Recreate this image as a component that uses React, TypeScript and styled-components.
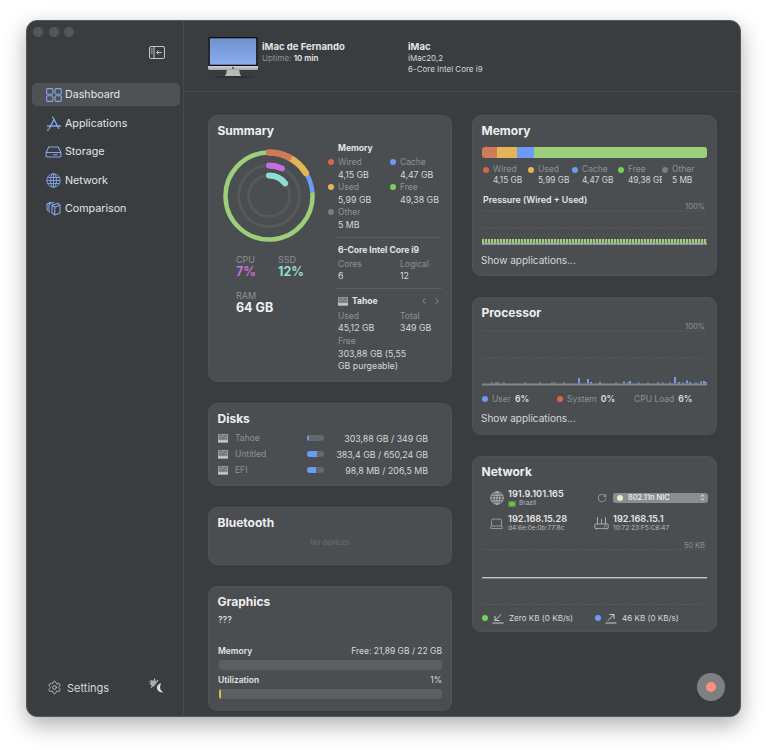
import React from 'react';
import styled, { createGlobalStyle } from 'styled-components';
import { ChevronLeft, ChevronRight, Laptop, RotateCw, Settings } from 'lucide-react';

const colors = {
  window: '#393d40',
  card: '#4b4e51',
  line: '#46494c',
  text: '#e4e5e6',
  value: '#d6d7d8',
  label: '#8e9193',
  blue: '#6c9bf5',
  iconBlue: '#86a6ea',
  orange: '#cf7a58',
  red: '#d8654a',
  yellow: '#e4b555',
  green: '#9bcf7c',
  brightGreen: '#78cf5c',
  purple: '#c56fd8',
  teal: '#8fdcd2',
  grey: '#7b7e80',
};

const GlobalStyle = createGlobalStyle`
  html, body {
    margin: 0;
    padding: 0;
    background: #fff;
    font-family: Inter, "Liberation Sans", sans-serif;
    -webkit-font-smoothing: antialiased;
  }
`;

const Page = styled.div`
  width: 767px;
  height: 750px;
  padding: 20px 0 0 26px;
  box-sizing: border-box;
  overflow: hidden;
`;

const Window = styled.div`
  position: relative;
  width: 715px;
  height: 697px;
  display: flex;
  box-sizing: border-box;
  background: ${colors.window};
  border: 1px solid #55585a;
  border-radius: 11px;
  box-shadow: 0 8px 22px rgba(0, 0, 0, 0.32);
  overflow: hidden;
`;

const Sidebar = styled.aside`
  width: 157px;
  flex: none;
  display: flex;
  flex-direction: column;
  padding: 5px 3px 0 5px;
  box-sizing: border-box;
  border-right: 1px solid ${colors.line};
`;

const Lights = styled.div`
  display: flex;
  gap: 5.5px;
  padding-left: 1px;
  height: 12px;
  align-items: center;
`;

const Light = styled.span`
  width: 10px;
  height: 10px;
  border-radius: 50%;
  background: #55585b;
`;

const ToggleRow = styled.div`
  display: flex;
  justify-content: flex-end;
  padding: 8px 15px 0 0;
  height: 36px;
  box-sizing: border-box;
`;

const Nav = styled.nav`
  display: flex;
  flex-direction: column;
  gap: 5.5px;
  margin-top: 9px;
`;

const NavItem = styled.div<{ $active?: boolean }>`
  height: 23px;
  display: flex;
  align-items: center;
  gap: 3px;
  padding-left: 13px;
  border-radius: 5px;
  font-size: 10.7px;
  color: ${colors.text};
  background: ${(p) => (p.$active ? '#4e5255' : 'transparent')};
`;

const NavIcon = styled.span`
  width: 17px;
  display: flex;
  justify-content: center;
  flex: none;
`;

const SidebarFoot = styled.div`
  margin-top: auto;
  display: flex;
  align-items: center;
  padding: 0 0 21px 15px;
  font-size: 11px;
  color: ${colors.value};
  gap: 5px;
`;

const MoonWrap = styled.span`
  display: flex;
  margin-left: 35px;
  margin-top: -3px;
`;

const Main = styled.main`
  flex: 1;
  min-width: 0;
  display: flex;
  flex-direction: column;
`;

const Header = styled.header`
  height: 71px;
  flex: none;
  display: flex;
  box-sizing: border-box;
  border-bottom: 1px solid ${colors.line};
  padding: 16px 0 0 24px;
`;

const HeaderName = styled.div`
  margin-left: 4px;
  width: 146px;
  padding-top: 3px;
`;

const HeaderModel = styled.div`
  padding-top: 3px;
`;

const Strong = styled.div`
  font-size: 9.5px;
  line-height: 13px;
  font-weight: 700;
  color: ${colors.text};
`;

const Fine = styled.div`
  font-size: 8px;
  line-height: 11px;
  color: ${colors.value};
`;

const Uptime = styled.span`
  color: ${colors.label};
`;

const UptimeValue = styled.b`
  font-weight: 600;
  color: ${colors.text};
`;

const Columns = styled.div`
  display: flex;
  gap: 20px;
  padding: 23px 0 0 24px;
  align-items: flex-start;
`;

const Column = styled.div<{ $width: number }>`
  width: ${(p) => p.$width}px;
  display: flex;
  flex-direction: column;
  gap: 21px;
`;

const Card = styled.section<{ $height: number }>`
  height: ${(p) => p.$height}px;
  box-sizing: border-box;
  background: ${colors.card};
  border-radius: 9px;
  border: 1px solid #505356;
  padding: 7px 9px 0;
  display: flex;
  flex-direction: column;
`;

const CardTitle = styled.h2`
  margin: 1px 0 -1px -0.5px;
  font-size: 12px;
  line-height: 14px;
  font-weight: 700;
  color: #eeeeef;
`;

const SummaryBody = styled.div`
  display: flex;
`;

const SummaryLeft = styled.div`
  width: 120px;
  flex: none;
`;

const RingSvg = styled.svg`
  display: block;
  margin: 9px 0 0 0.5px;
`;

const Stats = styled.div`
  display: grid;
  grid-template-columns: 42px 42px;
  padding: 8px 0 0 18px;
  row-gap: 11px;
`;

const StatLabel = styled.div`
  font-size: 9px;
  line-height: 11px;
  color: ${colors.label};
`;

const StatValue = styled.div<{ $color: string }>`
  font-size: 12.5px;
  line-height: 14px;
  font-weight: 700;
  color: ${(p) => p.$color};
`;

const SummaryRight = styled.div`
  flex: 1;
  min-width: 0;
  padding-top: 5px;
`;

const SubTitle = styled.div`
  font-size: 8.5px;
  line-height: 12px;
  font-weight: 700;
  color: ${colors.text};
`;

const TwoCols = styled.div`
  display: grid;
  grid-template-columns: 62px 1fr;
  margin-top: 2px;
`;

const Stat = styled.div<{ $dot?: string; $wide?: boolean }>`
  position: relative;
  grid-column: ${(p) => (p.$wide ? '1 / -1' : 'auto')};

  &::before {
    content: '';
    display: ${(p) => (p.$dot ? 'block' : 'none')};
    position: absolute;
    left: -10px;
    top: 3px;
    width: 6px;
    height: 6px;
    border-radius: 50%;
    background: ${(p) => p.$dot};
  }
`;

const Small = styled.div`
  font-size: 8.5px;
  line-height: 12.6px;
  color: ${colors.label};
`;

const SmallValue = styled(Small)`
  font-size: 8.8px;
  color: ${colors.value};
`;

const Rule = styled.hr`
  margin: 5px 0 6px -2px;
  border: 0;
  border-top: 1px solid #5a5d60;
`;

const DiskHead = styled.div`
  display: flex;
  align-items: center;
  gap: 4px;
  margin: 1px 0 3px;
  color: ${colors.value};
`;

const Pager = styled.span`
  margin-left: auto;
  display: flex;
  gap: 3px;
  color: #b9babb;
`;

const BarTrack = styled.div`
  height: 11px;
  display: flex;
  border-radius: 3px;
  overflow: hidden;
  margin-top: 10px;
`;

const BarPart = styled.div<{ $color: string; $grow: number }>`
  flex: ${(p) => p.$grow} 0 0;
  background: ${(p) => p.$color};
`;

const MemLegend = styled.div`
  display: flex;
  margin-top: 6px;
  padding-left: 1px;
`;

const MemLabel = styled.div`
  font-size: 8.5px;
  line-height: 11px;
  color: ${colors.label};
`;

const MemValue = styled.div`
  font-size: 8.3px;
  line-height: 11px;
  color: ${colors.value};
`;

const MemItem = styled.div<{ $width: number; $dot: string }>`
  position: relative;
  width: ${(p) => p.$width}px;
  flex: none;
  padding-left: 10px;
  box-sizing: border-box;
  overflow: hidden;
  white-space: nowrap;

  &::before {
    content: '';
    position: absolute;
    left: 0;
    top: 2.5px;
    width: 6px;
    height: 6px;
    border-radius: 50%;
    background: ${(p) => p.$dot};
  }
`;

const PressureTitle = styled.div`
  font-size: 8.8px;
  line-height: 12px;
  font-weight: 600;
  color: ${colors.text};
  margin-top: 8px;
  padding-left: 1px;
`;

const ChartBox = styled.div<{ $top: number }>`
  position: relative;
  margin-top: ${(p) => p.$top}px;
`;

const ChartSvg = styled.svg`
  display: block;
`;

const Scale = styled.span`
  position: absolute;
  right: 2px;
  top: -8px;
  font-size: 7.5px;
  line-height: 9px;
  color: ${colors.label};
`;

const ShowApps = styled.div<{ $top: number }>`
  font-size: 10px;
  line-height: 13px;
  color: ${colors.value};
  margin: ${(p) => p.$top}px 0 0 -1px;
`;

const InlineLegend = styled.div`
  display: flex;
  margin-top: 7px;
  font-size: 8.5px;
  line-height: 12px;
`;

const InlineItem = styled.div<{ $width: number }>`
  width: ${(p) => p.$width}px;
  flex: none;
  display: flex;
  align-items: center;
  gap: 4px;
  color: ${colors.label};
`;

const Dot = styled.span<{ $color: string }>`
  width: 6px;
  height: 6px;
  border-radius: 50%;
  flex: none;
  background: ${(p) => p.$color};
`;

const InlineValue = styled.b`
  font-weight: 700;
  color: ${colors.value};
`;

const NetGrid = styled.div`
  display: grid;
  grid-template-columns: 110px 1fr;
  row-gap: 5px;
  margin-top: 10px;
`;

const NetCell = styled.div<{ $pad: number; $gap: number }>`
  display: flex;
  align-items: center;
  gap: ${(p) => p.$gap}px;
  padding-left: ${(p) => p.$pad}px;
`;

const NetText = styled.div`
  min-width: 0;
  flex: 1;
`;

const Ip = styled.div`
  font-size: 9.2px;
  line-height: 11px;
  font-weight: 600;
  color: ${colors.text};
`;

const Sub = styled.div`
  display: flex;
  align-items: center;
  gap: 3px;
  font-size: 6.5px;
  line-height: 9px;
  color: #b8babb;
`;

const Select = styled.div`
  height: 10px;
  display: flex;
  align-items: center;
  gap: 5px;
  margin: -1px -1px 0 0;
  padding: 0 3px 0 4px;
  border-radius: 3px;
  background: #8b8e90;
  font-size: 7.5px;
  font-weight: 500;
  color: #f0f0f0;
`;

const SelectDot = styled.span`
  width: 6px;
  height: 6px;
  border-radius: 50%;
  background: #d9f5c8;
`;

const SelectArrows = styled.svg`
  margin-left: auto;
`;

const NetLegend = styled.div`
  display: flex;
  margin-top: 7px;
  font-size: 8.1px;
  line-height: 12px;
  color: ${colors.value};
`;

const NetLegendItem = styled.div<{ $width: number }>`
  width: ${(p) => p.$width}px;
  flex: none;
  display: flex;
  align-items: center;
  gap: 4px;
`;

const TransferSvg = styled.svg`
  margin-right: 1px;
`;

const DiskRows = styled.div`
  display: flex;
  flex-direction: column;
  gap: 4px;
  margin-top: 7px;
`;

const DiskRow = styled.div`
  display: flex;
  align-items: center;
  height: 12px;
  font-size: 8.5px;
`;

const DiskName = styled.span`
  width: 72px;
  margin-left: 7px;
  flex: none;
  color: ${colors.label};
`;

const DiskBar = styled.span`
  width: 17px;
  height: 6px;
  flex: none;
  border-radius: 3px;
  background: #65686a;
  overflow: hidden;
  display: flex;
`;

const DiskFill = styled.span`
  background: ${colors.blue};
`;

const DiskValue = styled.span`
  margin-left: auto;
  padding-right: 14px;
  font-size: 8.8px;
  color: ${colors.value};
`;

const NoDevices = styled.div`
  text-align: center;
  font-size: 7.5px;
  margin-top: 9px;
  color: #6a6e70;
`;

const GpuName = styled.div`
  font-size: 8.5px;
  font-weight: 600;
  line-height: 12px;
  color: ${colors.value};
  margin-top: 6px;
`;

const GpuHead = styled.div<{ $top: number }>`
  display: flex;
  justify-content: space-between;
  align-items: center;
  font-size: 8.5px;
  line-height: 12px;
  margin-top: ${(p) => p.$top}px;
  color: ${colors.value};
`;

const GpuLabel = styled.span`
  font-weight: 600;
  color: ${colors.text};
`;

const GpuTrack = styled.div`
  height: 10px;
  margin: 3px 0 0 1px;
  border-radius: 3px;
  background: #5c5f62;
  overflow: hidden;
`;

const GpuFill = styled.div`
  height: 100%;
  background: ${colors.yellow};
`;

const RecordButton = styled.div`
  position: absolute;
  right: 15px;
  bottom: 15px;
  width: 28px;
  height: 28px;
  border-radius: 50%;
  background: #7c8082;
  display: flex;
  align-items: center;
  justify-content: center;

  &::after {
    content: '';
    width: 10px;
    height: 10px;
    border-radius: 50%;
    background: #ff8e7e;
  }
`;

function polar(r: number, deg: number) {
  const a = ((deg - 90) * Math.PI) / 180;
  return [50 + r * Math.cos(a), 50 + r * Math.sin(a)];
}

function arc(r: number, from: number, to: number) {
  const [x1, y1] = polar(r, from);
  const [x2, y2] = polar(r, to);
  return `M${x1} ${y1} A${r} ${r} 0 ${to - from > 180 ? 1 : 0} 1 ${x2} ${y2}`;
}

function Ring() {
  return (
    <RingSvg width="100" height="100" viewBox="0 0 100 100" fill="none">
      <circle cx="50" cy="50" r="30.5" stroke="#56595c" strokeWidth="3" />
      <circle cx="50" cy="50" r="20.5" stroke="#56595c" strokeWidth="3" />
      <path d={arc(43.5, 85, 358)} stroke={colors.green} strokeWidth="4.5" />
      <path d={arc(43.5, 58, 85)} stroke={colors.blue} strokeWidth="4.5" />
      <path d={arc(43.5, 28, 58)} stroke={colors.yellow} strokeWidth="6.5" strokeLinecap="round" />
      <path d={arc(43.5, 0, 27)} stroke={colors.orange} strokeWidth="6.5" strokeLinecap="round" />
      <path d={arc(30.5, 0, 25)} stroke={colors.purple} strokeWidth="6" strokeLinecap="round" />
      <path d={arc(20.5, 0, 52)} stroke={colors.teal} strokeWidth="6" strokeLinecap="round" />
    </RingSvg>
  );
}

function SidebarToggle() {
  return (
    <svg width="16" height="13" viewBox="0 0 16 13" fill="none" stroke="#d4d5d6" strokeWidth="0.9">
      <rect x="0.5" y="0.5" width="15" height="12" rx="1.5" />
      <path d="M5 0.5V12.5M1.8 3H3.6M1.8 5H3.6M1.8 7H3.6M12.5 6.5H7.6M9.6 4.5L7.6 6.5L9.6 8.5" />
    </svg>
  );
}

function DashboardIcon() {
  return (
    <svg width="16" height="14" viewBox="0 0 16 14" fill="none" stroke={colors.iconBlue} strokeWidth="1.1">
      <rect x="0.6" y="0.6" width="6.3" height="5.6" rx="1.2" />
      <rect x="9" y="0.6" width="6.3" height="5.6" rx="1.2" />
      <rect x="0.6" y="7.8" width="6.3" height="5.6" rx="1.2" />
      <rect x="9" y="7.8" width="6.3" height="5.6" rx="1.2" />
    </svg>
  );
}

function AppsIcon() {
  return (
    <svg width="16" height="15" viewBox="0 0 16 15" fill="none" stroke={colors.iconBlue} strokeWidth="1.3" strokeLinecap="round">
      <path d="M6.5 1L8 3.4M8 3.4L3.3 12.5M8 3.4L12.7 12.5M1.5 10H14.5M1.5 14H2.4" />
    </svg>
  );
}

function StorageIcon() {
  return (
    <svg width="17" height="12" viewBox="0 0 17 12" fill="none" stroke={colors.iconBlue} strokeWidth="1.1">
      <path d="M3.7 1H13.3L15.9 6.5V9.7C15.9 10.5 15.4 11 14.6 11H2.4C1.6 11 1.1 10.5 1.1 9.7V6.5Z" />
      <path d="M1.1 6.5H15.9M8 8.8H12.5" />
    </svg>
  );
}

function GlobeIcon({ color = colors.iconBlue, size = 15 }: { color?: string; size?: number }) {
  return (
    <svg width={size} height={size} viewBox="0 0 15 15" fill="none" stroke={color} strokeWidth="0.9">
      <circle cx="7.5" cy="7.5" r="6.7" />
      <ellipse cx="7.5" cy="7.5" rx="3" ry="6.7" />
      <path d="M7.5 0.8V14.2M1.4 4.5H13.6M0.8 7.5H14.2M1.4 10.5H13.6" />
    </svg>
  );
}

function CompareIcon() {
  return (
    <svg width="15" height="15" viewBox="0 0 15 15" fill="none" stroke={colors.iconBlue} strokeWidth="1.1" strokeLinejoin="round">
      <path d="M6 4.2L11.8 2.2L14 4.2V12L8.8 14L6 12Z" />
      <path d="M8.8 14V6L14 4.2M6 4.2L8.8 6" />
      <path d="M4 11.5L3 10.2V3.3L8 1.2M1.8 9.6L1 8.5V3L5 1" />
    </svg>
  );
}

function SunMoon() {
  return (
    <svg width="17" height="16" viewBox="0 0 17 16" fill="none" stroke="#b9baba" strokeWidth="1.1" strokeLinecap="round">
      <path d="M8.2 4.3A3.4 3.4 0 1 0 4.3 9" fill="#a9abac" stroke="none" />
      <path d="M5.5 0.7V2M1 5.8H2.2M2.3 2.4L3.2 3.3M8.8 2.4L7.9 3.3M2.3 9.3L3.2 8.4M0.9 3.6L1.7 4" />
      <path d="M12.2 5.2C9.3 5.7 7.6 8 8 10.6C8.5 13.3 11.2 15 14.4 14.3C12.2 13.2 11.1 11.4 11.1 9.5C11.1 7.8 11.6 6.4 12.2 5.2Z" fill="#dcdddd" stroke="none" />
    </svg>
  );
}

function ImacPicture() {
  return (
    <svg width="50" height="42" viewBox="0 0 50 42">
      <defs>
        <linearGradient id="screen" x1="0" y1="0" x2="0" y2="1">
          <stop offset="0" stopColor="#6f92cf" />
          <stop offset="1" stopColor="#8cadec" />
        </linearGradient>
        <linearGradient id="chin" x1="0" y1="0" x2="0" y2="1">
          <stop offset="0" stopColor="#d2d3d4" />
          <stop offset="1" stopColor="#a5a6a8" />
        </linearGradient>
      </defs>
      <rect x="0.5" y="0" width="49" height="29" rx="1.2" fill="#0c0c0e" />
      <rect x="1.8" y="1.3" width="46.4" height="26.4" fill="url(#screen)" />
      <path d="M0 29H50V31.6C50 32.6 49.5 33 48.6 33H1.4C0.5 33 0 32.6 0 31.6Z" fill="url(#chin)" />
      <circle cx="25" cy="31" r="0.9" fill="#3a3a3a" />
      <path d="M18.8 33H31.2L32 37.6C33 38 33.2 38.6 32.8 39H17.2C16.8 38.6 17 38 18 37.6Z" fill="#b8b9ba" />
      <ellipse cx="25" cy="40" rx="20" ry="1" fill="#2e3134" />
    </svg>
  );
}

function DiskGlyph() {
  return (
    <svg width="10" height="10" viewBox="0 0 10 10">
      <rect x="0" y="1" width="10" height="8.5" rx="0.8" fill="#a3a5a7" />
      <rect x="0.8" y="1.6" width="8.4" height="5" fill="#75787b" />
      <path d="M2 4H3.5M4.5 3H5.6M7 4.5H8" stroke="#c4c5c6" strokeWidth="0.7" />
      <rect x="0" y="7.2" width="10" height="2.3" fill="#c3c4c5" />
    </svg>
  );
}

function RouterIcon() {
  return (
    <svg width="15" height="14" viewBox="0 0 15 14" fill="none" stroke="#bfc0c1" strokeWidth="0.8">
      <rect x="0.8" y="8" width="13.4" height="4.4" rx="0.6" />
      <path d="M3.5 1V8M7.5 3V8M11.5 1V8M2.5 12.5V13.6M12.5 12.5V13.6M10 10.2H12.4" />
    </svg>
  );
}

function Brazil() {
  return (
    <svg width="8" height="6" viewBox="0 0 8 6">
      <rect width="8" height="6" fill="#3f9a45" />
      <path d="M4 0.7L7.2 3L4 5.3L0.8 3Z" fill="#b9c24f" />
      <circle cx="4" cy="3" r="0.8" fill="#4a6a6f" />
    </svg>
  );
}

function TransferIcon({ up }: { up?: boolean }) {
  return (
    <TransferSvg width="12" height="11" viewBox="0 0 12 11" fill="none" stroke="#d8d9d9" strokeWidth="0.9">
      {up ? <path d="M3 7.5L9 1.5M4.4 1.5H9V6" /> : <path d="M9 1.5L3 7.5M3 3V7.5H7.5" />}
      <path d="M0.5 10H11.5" />
    </TransferSvg>
  );
}

function DashLine({ y }: { y: number }) {
  return <line x1="0" x2="225" y1={y} y2={y} stroke="#66696b" strokeWidth="0.7" strokeDasharray="1.5 1.5" />;
}

const pressureBars = Array.from({ length: 75 }, (_, i) => i * 3);

function PressureChart() {
  return (
    <ChartBox $top={4}>
      <Scale>100%</Scale>
      <ChartSvg width="225" height="35" viewBox="0 0 225 35">
        <DashLine y={1} />
        <DashLine y={18} />
        {pressureBars.map((x) => (
          <rect key={x} x={x} y="29" width="2.2" height="4.5" fill={colors.green} />
        ))}
        <rect x="0" y="33.5" width="225" height="1" fill="#d0d2d3" />
      </ChartSvg>
    </ChartBox>
  );
}

const cpuBars: [number, number][] = [
  [9, 1], [13, 1], [15, 1], [21, 1], [42, 1], [57, 1], [69, 1], [72, 1], [81, 1], [96, 5.5],
  [105, 4.5], [108, 1.5], [117, 1.5], [133, 1], [141, 2], [145, 1], [147, 2.5], [156, 1],
  [165, 1], [175, 1], [180, 1], [187, 1], [192, 6.5], [196, 1.5], [200, 1], [204, 3], [207, 1.5],
  [213, 1], [218, 2], [221, 2.5], [223, 1.5],
];

function CpuChart() {
  return (
    <ChartBox $top={11}>
      <Scale>100%</Scale>
      <ChartSvg width="225" height="56" viewBox="0 0 225 56">
        <DashLine y={1} />
        <DashLine y={28} />
        {cpuBars.map(([x, h]) => (
          <rect key={x} x={x} y={53.5 - h} width="2" height={h} fill={colors.blue} />
        ))}
        <rect x="0" y="53.5" width="225" height="2" fill="#85888a" />
      </ChartSvg>
    </ChartBox>
  );
}

function NetworkChart() {
  return (
    <ChartBox $top={16}>
      <Scale>50 KB</Scale>
      <ChartSvg width="225" height="56" viewBox="0 0 225 56">
        <DashLine y={0.5} />
        <rect x="0" y="28" width="225" height="1.4" fill="#c4c6c7" />
        <DashLine y={55.5} />
      </ChartSvg>
    </ChartBox>
  );
}

const disks = [
  { name: 'Tahoe', fill: 13, usage: '303,88 GB / 349 GB' },
  { name: 'Untitled', fill: 59, usage: '383,4 GB / 650,24 GB' },
  { name: 'EFI', fill: 52, usage: '98,8 MB / 206,5 MB' },
];

const memoryLegend = [
  { label: 'Wired', value: '4,15 GB', color: colors.red, width: 45 },
  { label: 'Used', value: '5,99 GB', color: colors.yellow, width: 44 },
  { label: 'Cache', value: '4,47 GB', color: colors.blue, width: 46 },
  { label: 'Free', value: '49,38 GB', color: colors.brightGreen, width: 44 },
  { label: 'Other', value: '5 MB', color: colors.grey, width: 45 },
];

export default function App() {
  return (
    <Page>
      <GlobalStyle />
      <Window>
        <Sidebar>
          <Lights>
            <Light />
            <Light />
            <Light />
          </Lights>
          <ToggleRow>
            <SidebarToggle />
          </ToggleRow>
          <Nav>
            <NavItem $active><NavIcon><DashboardIcon /></NavIcon>Dashboard</NavItem>
            <NavItem><NavIcon><AppsIcon /></NavIcon>Applications</NavItem>
            <NavItem><NavIcon><StorageIcon /></NavIcon>Storage</NavItem>
            <NavItem><NavIcon><GlobeIcon /></NavIcon>Network</NavItem>
            <NavItem><NavIcon><CompareIcon /></NavIcon>Comparison</NavItem>
          </Nav>
          <SidebarFoot>
            <Settings size={15} strokeWidth={1.3} color="#cfd0d1" />
            Settings
            <MoonWrap><SunMoon /></MoonWrap>
          </SidebarFoot>
        </Sidebar>
        <Main>
          <Header>
            <ImacPicture />
            <HeaderName>
              <Strong>iMac de Fernando</Strong>
              <Fine><Uptime>Uptime: </Uptime><UptimeValue>10 min</UptimeValue></Fine>
            </HeaderName>
            <HeaderModel>
              <Strong>iMac</Strong>
              <Fine>iMac20,2</Fine>
              <Fine>6-Core Intel Core i9</Fine>
            </HeaderModel>
          </Header>
          <Columns>
            <Column $width={244}>
              <Card $height={267}>
                <CardTitle>Summary</CardTitle>
                <SummaryBody>
                  <SummaryLeft>
                    <Ring />
                    <Stats>
                      <div>
                        <StatLabel>CPU</StatLabel>
                        <StatValue $color={colors.purple}>7%</StatValue>
                      </div>
                      <div>
                        <StatLabel>SSD</StatLabel>
                        <StatValue $color={colors.teal}>12%</StatValue>
                      </div>
                      <div>
                        <StatLabel>RAM</StatLabel>
                        <StatValue $color="#f0f0f0">64 GB</StatValue>
                      </div>
                    </Stats>
                  </SummaryLeft>
                  <SummaryRight>
                    <SubTitle>Memory</SubTitle>
                    <TwoCols>
                      <Stat $dot={colors.red}><Small>Wired</Small><SmallValue>4,15 GB</SmallValue></Stat>
                      <Stat $dot={colors.blue}><Small>Cache</Small><SmallValue>4,47 GB</SmallValue></Stat>
                      <Stat $dot={colors.yellow}><Small>Used</Small><SmallValue>5,99 GB</SmallValue></Stat>
                      <Stat $dot={colors.brightGreen}><Small>Free</Small><SmallValue>49,38 GB</SmallValue></Stat>
                      <Stat $dot={colors.grey}><Small>Other</Small><SmallValue>5 MB</SmallValue></Stat>
                    </TwoCols>
                    <Rule />
                    <SubTitle>6-Core Intel Core i9</SubTitle>
                    <TwoCols>
                      <Stat><Small>Cores</Small><SmallValue>6</SmallValue></Stat>
                      <Stat><Small>Logical</Small><SmallValue>12</SmallValue></Stat>
                    </TwoCols>
                    <Rule />
                    <DiskHead>
                      <DiskGlyph />
                      <SubTitle>Tahoe</SubTitle>
                      <Pager>
                        <ChevronLeft size={10} strokeWidth={1.4} />
                        <ChevronRight size={10} strokeWidth={1.4} />
                      </Pager>
                    </DiskHead>
                    <TwoCols>
                      <Stat><Small>Used</Small><SmallValue>45,12 GB</SmallValue></Stat>
                      <Stat><Small>Total</Small><SmallValue>349 GB</SmallValue></Stat>
                      <Stat $wide>
                        <Small>Free</Small>
                        <SmallValue>303,88 GB (5,55<br />GB purgeable)</SmallValue>
                      </Stat>
                    </TwoCols>
                  </SummaryRight>
                </SummaryBody>
              </Card>
              <Card $height={83}>
                <CardTitle>Disks</CardTitle>
                <DiskRows>
                  {disks.map((d) => (
                    <DiskRow key={d.name}>
                      <DiskGlyph />
                      <DiskName>{d.name}</DiskName>
                      <DiskBar><DiskFill style={{ width: `${d.fill}%` }} /></DiskBar>
                      <DiskValue>{d.usage}</DiskValue>
                    </DiskRow>
                  ))}
                </DiskRows>
              </Card>
              <Card $height={58}>
                <CardTitle>Bluetooth</CardTitle>
                <NoDevices>No devices</NoDevices>
              </Card>
              <Card $height={125}>
                <CardTitle>Graphics</CardTitle>
                <GpuName>???</GpuName>
                <GpuHead $top={19}><GpuLabel>Memory</GpuLabel><span>Free: 21,89 GB / 22 GB</span></GpuHead>
                <GpuTrack />
                <GpuHead $top={4}><GpuLabel>Utilization</GpuLabel><span>1%</span></GpuHead>
                <GpuTrack><GpuFill style={{ width: '1%' }} /></GpuTrack>
              </Card>
            </Column>
            <Column $width={245}>
              <Card $height={161}>
                <CardTitle>Memory</CardTitle>
                <BarTrack>
                  <BarPart $color={colors.orange} $grow={15} />
                  <BarPart $color={colors.yellow} $grow={20} />
                  <BarPart $color={colors.blue} $grow={17} />
                  <BarPart $color={colors.green} $grow={173} />
                </BarTrack>
                <MemLegend>
                  {memoryLegend.map((m) => (
                    <MemItem key={m.label} $width={m.width} $dot={m.color}>
                      <MemLabel>{m.label}</MemLabel>
                      <MemValue>{m.value}</MemValue>
                    </MemItem>
                  ))}
                </MemLegend>
                <PressureTitle>Pressure (Wired + Used)</PressureTitle>
                <PressureChart />
                <ShowApps $top={9}>Show applications...</ShowApps>
              </Card>
              <Card $height={138}>
                <CardTitle>Processor</CardTitle>
                <CpuChart />
                <InlineLegend>
                  <InlineItem $width={75}><Dot $color={colors.blue} />User <InlineValue>6%</InlineValue></InlineItem>
                  <InlineItem $width={77}><Dot $color={colors.red} />System <InlineValue>0%</InlineValue></InlineItem>
                  <InlineItem $width={70}>CPU Load <InlineValue>6%</InlineValue></InlineItem>
                </InlineLegend>
                <ShowApps $top={7}>Show applications...</ShowApps>
              </Card>
              <Card $height={176}>
                <CardTitle>Network</CardTitle>
                <NetGrid>
                  <NetCell $pad={8} $gap={4}>
                    <GlobeIcon color="#bfc0c1" size={14} />
                    <NetText>
                      <Ip>191.9.101.165</Ip>
                      <Sub><Brazil />Brazil</Sub>
                    </NetText>
                  </NetCell>
                  <NetCell $pad={5} $gap={6}>
                    <RotateCw size={10} strokeWidth={1.2} color="#d0d1d2" />
                    <NetText>
                      <Select>
                        <SelectDot />
                        802.11n NIC
                        <SelectArrows width="5" height="7" viewBox="0 0 5 7" fill="none" stroke="#fff" strokeWidth="0.9">
                          <path d="M0.8 2.6L2.5 1L4.2 2.6M0.8 4.4L2.5 6L4.2 4.4" />
                        </SelectArrows>
                      </Select>
                    </NetText>
                  </NetCell>
                  <NetCell $pad={7} $gap={4}>
                    <Laptop size={15} strokeWidth={1} color="#bfc0c1" />
                    <NetText>
                      <Ip>192.168.15.28</Ip>
                      <Sub>d4:6e:0e:0b:77:8c</Sub>
                    </NetText>
                  </NetCell>
                  <NetCell $pad={2} $gap={4}>
                    <RouterIcon />
                    <NetText>
                      <Ip>192.168.15.1</Ip>
                      <Sub>10:72:23:F5:C6:47</Sub>
                    </NetText>
                  </NetCell>
                </NetGrid>
                <NetworkChart />
                <NetLegend>
                  <NetLegendItem $width={113}>
                    <Dot $color={colors.brightGreen} />
                    <TransferIcon />
                    Zero KB (0 KB/s)
                  </NetLegendItem>
                  <NetLegendItem $width={110}>
                    <Dot $color={colors.blue} />
                    <TransferIcon up />
                    46 KB (0 KB/s)
                  </NetLegendItem>
                </NetLegend>
              </Card>
            </Column>
          </Columns>
        </Main>
        <RecordButton />
      </Window>
    </Page>
  );
}
